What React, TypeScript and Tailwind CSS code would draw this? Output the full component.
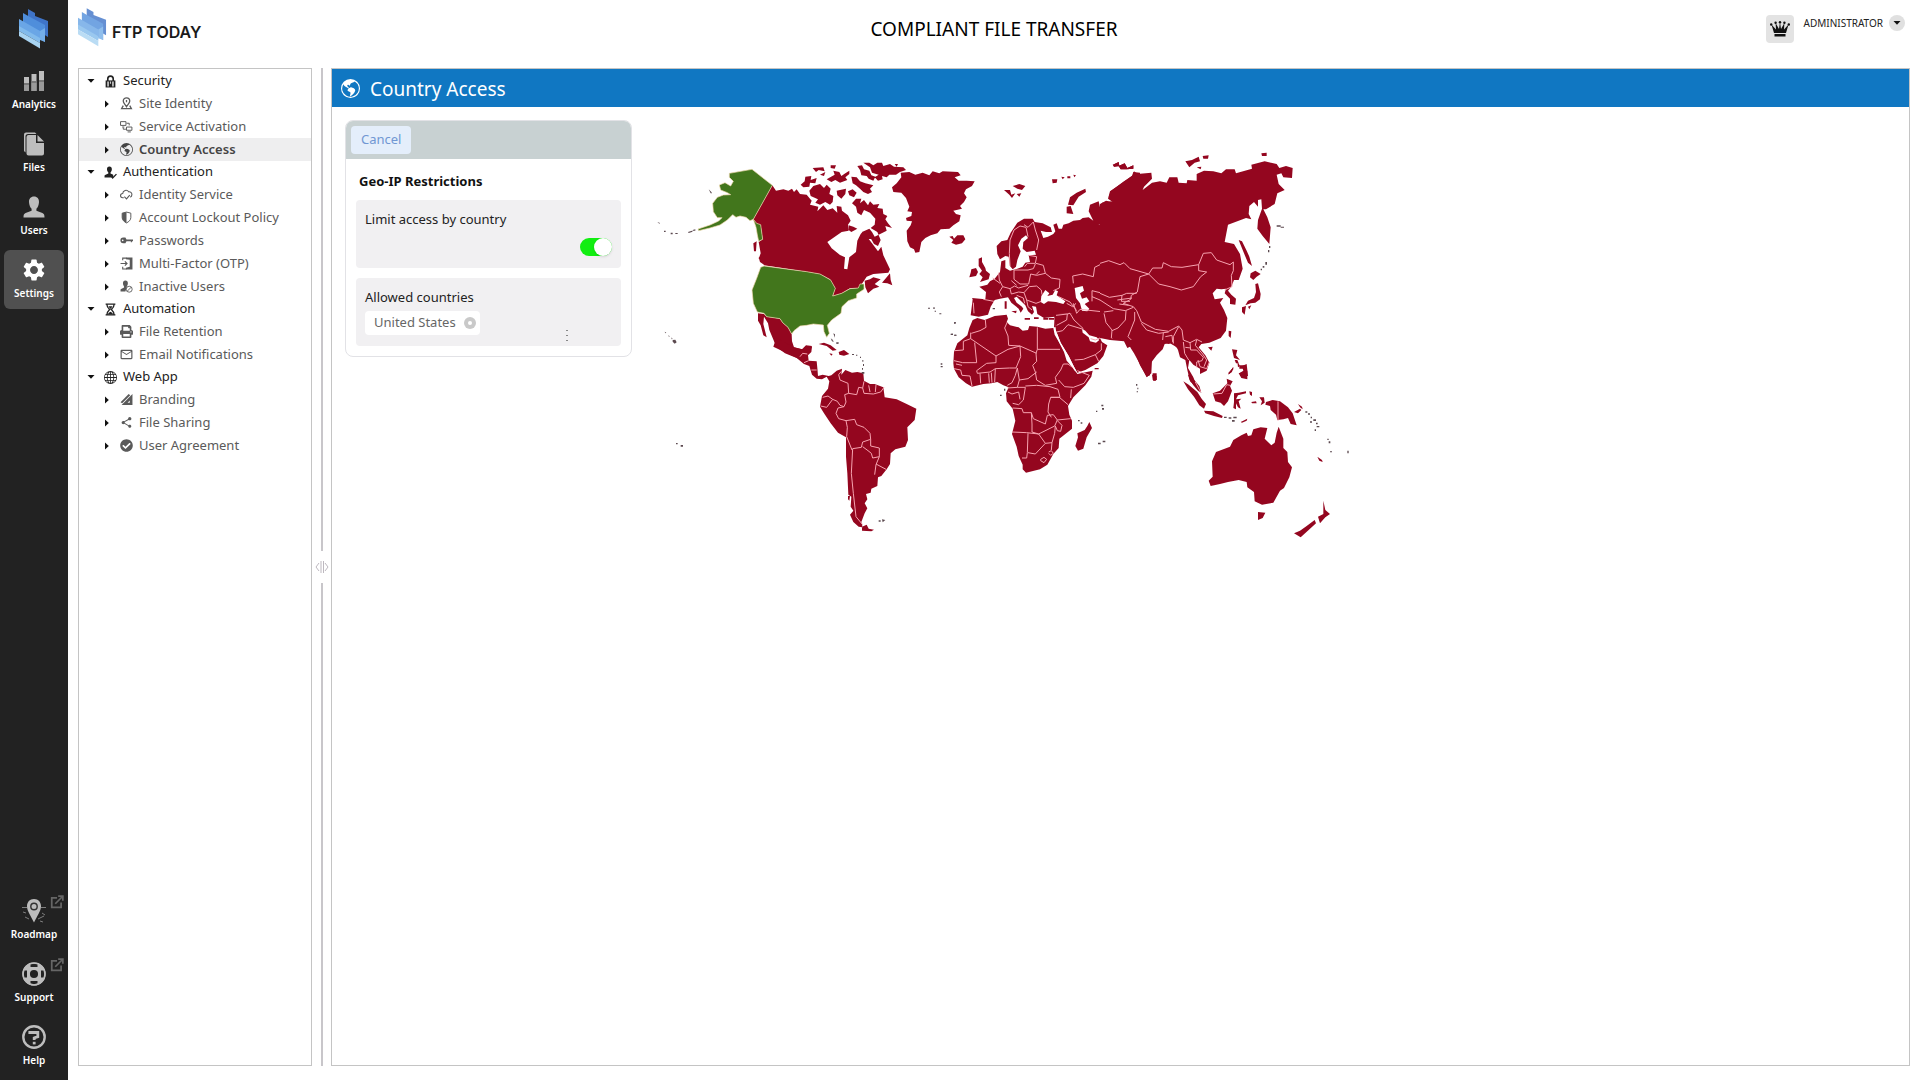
import { useState } from "react";
import type { ReactNode } from "react";
import { BsGlobe, BsGlobeAmericas } from "react-icons/bs";
import { FaCheckCircle, FaPrint } from "react-icons/fa";
import { MdOutlineEmail, MdSettings, MdShare } from "react-icons/md";

const svgIcon = (children: ReactNode) => (
  <svg viewBox="0 0 24 24" className="w-full h-full" fill="currentColor" aria-hidden="true">
    {children}
  </svg>
);

const icons: Record<string, ReactNode> = {
  analytics: svgIcon(
    <>
      <path d="M2 8h5v14H2zM9.500 5h5v17h-5zM17 2h5v20h-5z" />
      <path fill="#777" d="M2 14h5v2H2zM9.500 12h5v2h-5zM17 11h5v2h-5z" />
      <path fill="#999" d="M2 16h5v6H2zM9.500 14h5v8h-5zM17 13h5v9h-5z" />
    </>
  ),
  files: svgIcon(
    <>
      <path d="M2 2.500A2 2 0 0 1 4 .5h9l1.500 1.500H6A2.500 2.500 0 0 0 3.500 4.500v16L2 19z" />
      <path d="M6.500 3H14v8h8v10.500a2 2 0 0 1-2 2H6.500a2 2 0 0 1-2-2V5a2 2 0 0 1 2-2z" />
      <path d="M15.500 3 22 9.500h-6.500z" />
    </>
  ),
  users: svgIcon(
    <path d="M12 1.500c3.200 0 5.200 2.300 5 5.700-.2 3-1.300 5.300-2.600 6.600v2l6 2.200c1.700.7 2.100 2 2.100 4.500h-21c0-2.500.4-3.800 2.100-4.500l6-2.200v-2C8.300 12.500 7.200 10.200 7 7.200c-.2-3.400 1.800-5.700 5-5.700z" />
  ),
  roadmap: svgIcon(
    <>
      <path d="M0 8.500h5M19 8.500h5M1 13l3 1M20 14l3 2M3 18l4 2M16 20l6-3M18 22l3 1" stroke="currentColor" strokeWidth="1" opacity=".6" />
      <path d="M12 0C7.600 0 5 3.200 5 7.200 5 12 9 17 12 23.500 15 17 19 12 19 7.200 19 3.200 16.400 0 12 0z" />
      <circle cx="12" cy="7.500" r="3.200" fill="none" stroke="#333" strokeWidth="1.400" />
    </>
  ),
  support: svgIcon(
    <>
      <circle cx="12" cy="12" r="7.800" fill="none" stroke="currentColor" strokeWidth="7.500" />
      <path fill="#222" d="M8.500 1.800h7V5h-7zM8.500 19h7v3.200h-7zM1.800 8.500H5v7H1.800zM19 8.500h3.200v7H19z" />
      <circle cx="12" cy="12" r="11" fill="none" stroke="currentColor" strokeWidth="1.600" />
    </>
  ),
  help: svgIcon(
    <>
      <circle cx="12" cy="12" r="10.700" fill="none" stroke="currentColor" strokeWidth="2.400" />
      <path d="M7.800 9V7.500h8v4.200l-3.600 1.200v2" fill="none" stroke="currentColor" strokeWidth="2.800" />
      <path d="M10.800 16.800h2.800v2.600h-2.800z" />
    </>
  ),
  external: svgIcon(
    <path d="M12 5H3v16h16v-8M9 15 21 3M14 2h8v8" fill="none" stroke="currentColor" strokeWidth="3" />
  ),
  lock: svgIcon(
    <>
      <path d="M7 11V7a5 5 0 0 1 10 0v4" fill="none" stroke="currentColor" strokeWidth="3" />
      <path d="M3 10h18v13H3z" />
      <path fill="#ccc" d="M6 12h3v9H6zM11 12h2v4h-2zM15 12h3v9h-3z" />
    </>
  ),
  pin: svgIcon(
    <path d="M12 18C9 13 6 11 6 7.500a6 6 0 0 1 12 0C18 11 15 13 12 18zM12 5.500v4M6 16l-3 5.500h18L18 16" fill="none" stroke="currentColor" strokeWidth="2.400" />
  ),
  service: svgIcon(
    <path d="M1 3h10v7H1zM4 13h4M12 6h5v4M12 13h10v6H12zM14 22h6M6 14v3h5" fill="none" stroke="currentColor" strokeWidth="1.800" />
  ),
  auth: svgIcon(
    <>
      <path d="M10 1c3 0 4.500 2 4.500 5 0 2.500-1 4.500-2.500 6v2l5 2v5H1v-3c0-1 .5-1.500 2-2l5-2v-2C6.500 10.500 5.500 8.500 5.500 6c0-3 1.500-5 4.500-5z" />
      <path d="m13 18 3 4 7-7" fill="none" stroke="currentColor" strokeWidth="2.500" />
    </>
  ),
  identity: svgIcon(
    <path d="M7 18H5a4 4 0 0 1 0-8 6 6 0 0 1 11-3 5 5 0 0 1 6 5c0 2-1 4-3 5M8 16l4 4 6-7" fill="none" stroke="currentColor" strokeWidth="2" />
  ),
  shield: svgIcon(
    <>
      <path d="M12 2 4 4v8c0 5 4 8 8 10 4-2 8-5 8-10V4z" fill="none" stroke="currentColor" strokeWidth="1.800" />
      <path d="M12 2 4 4v8c0 5 4 8 8 10z" />
    </>
  ),
  key: svgIcon(
    <>
      <path d="M6 6.500h4l2 3.500h12v3.500h-2V15h-2v-1.500h-8L10 17H6a5 5 0 0 1 0-10.500z" />
      <circle cx="5" cy="11.800" r="1.500" fill="#fff" />
    </>
  ),
  otp: svgIcon(
    <>
      <path d="M11 1h12v22H11v-3l7-2V5l-7-1z" />
      <path d="M5 6V2h7M5 18v4h7M1 12h12M9 8l4 4-4 4" fill="none" stroke="currentColor" strokeWidth="2" />
    </>
  ),
  inactive: svgIcon(
    <>
      <path d="M10 1c3 0 4.500 2 4.500 5 0 2.500-1 4.500-2 6v2L10 21H1v-3c0-1 .5-1.500 2-2l4.500-2v-2C6.500 10.500 5.500 8.500 5.500 6c0-3 1.500-5 4.500-5z" />
      <circle cx="17" cy="17" r="5.500" fill="#fff" stroke="currentColor" strokeWidth="1.600" />
      <path d="m13 21 8-8" stroke="currentColor" strokeWidth="1.600" />
    </>
  ),
  hourglass: svgIcon(
    <>
      <path d="M3 2h18M3 22h18M5.500 3c0 5 3 7 5 9-2 2-5 4-5 9M18.500 3c0 5-3 7-5 9 2 2 5 4 5 9" fill="none" stroke="currentColor" strokeWidth="2.400" />
      <path d="M8 6h8l-4 5zM7 21c1-3 3-4 5-5 2 1 4 2 5 5z" />
    </>
  ),
  branding: svgIcon(
    <>
      <path d="M23 2v20H3zM18 14l-4 4h4z" fillRule="evenodd" />
      <path d="M1 17 16 2l3 2L4 19z" />
    </>
  ),
  settings: <MdSettings className="w-full h-full scale-110" />,
  country: <BsGlobeAmericas className="w-full h-full" />,
  web: <BsGlobe className="w-full h-full" />,
  print: <FaPrint className="w-full h-full" />,
  mail: <MdOutlineEmail className="w-full h-full scale-110" />,
  share: <MdShare className="w-full h-full" />,
  check: <FaCheckCircle className="w-full h-full" />,
};

const mainNav = [
  { label: "Analytics", icon: "analytics" },
  { label: "Files", icon: "files" },
  { label: "Users", icon: "users" },
  { label: "Settings", icon: "settings", active: true },
];

const helpNav = [
  { label: "Roadmap", icon: "roadmap", external: true },
  { label: "Support", icon: "support", external: true },
  { label: "Help", icon: "help" },
];

const tree = [
  {
    label: "Security",
    icon: "lock",
    items: [
      { label: "Site Identity", icon: "pin" },
      { label: "Service Activation", icon: "service" },
      { label: "Country Access", icon: "country", active: true },
    ],
  },
  {
    label: "Authentication",
    icon: "auth",
    items: [
      { label: "Identity Service", icon: "identity" },
      { label: "Account Lockout Policy", icon: "shield" },
      { label: "Passwords", icon: "key" },
      { label: "Multi-Factor (OTP)", icon: "otp" },
      { label: "Inactive Users", icon: "inactive" },
    ],
  },
  {
    label: "Automation",
    icon: "hourglass",
    items: [
      { label: "File Retention", icon: "print" },
      { label: "Email Notifications", icon: "mail" },
    ],
  },
  {
    label: "Web App",
    icon: "web",
    items: [
      { label: "Branding", icon: "branding" },
      { label: "File Sharing", icon: "share" },
      { label: "User Agreement", icon: "check" },
    ],
  },
];

function Logo({ className }: { className: string }) {
  return (
    <svg viewBox="0 0 30 40" className={className} aria-hidden="true">
      <path fill="#3f74c8" d="m9 0 7 4v3l13 5v16L9 16z" />
      <path fill="#4f8edb" d="m4 4 7 4 15 8v17L4 20z" />
      <path fill="#6aa6e6" d="m0 10 21 12v10L0 20z" />
      <path fill="#82bbec" d="m0 17 21 12v5L0 22z" />
      <path fill="#a9d4f2" d="m0 22 21 12v5.500L0 27z" />
      <path fill="#74aee8" d="m21 22 5-3v14l-5-2z" />
    </svg>
  );
}

type NavItem = { label: string; icon: string; active?: boolean; external?: boolean };

function NavButton({ item }: { item: NavItem }) {
  return (
    <a
      href="#"
      className={`relative flex flex-col items-center gap-[3px] h-[59px] mx-1 pt-2 rounded-md ${
        item.active ? "bg-[#505050] text-white" : "text-[#bdbdbd]"
      }`}
    >
      <span className="size-6">{icons[item.icon]}</span>
      <span className="text-[10px] leading-4 font-semibold text-white">{item.label}</span>
      {item.external && <span className="absolute right-0 top-1 size-[14px] text-[#666]">{icons.external}</span>}
    </a>
  );
}

function Caret({ down }: { down?: boolean }) {
  return (
    <svg viewBox="0 0 8 8" className="size-2 shrink-0" fill="#111" aria-hidden="true">
      <path d={down ? "M0.500 2h7L4 5.800z" : "M2 0.500v7L5.800 4z"} />
    </svg>
  );
}

function SettingsTree() {
  return (
    <nav className="w-[234px] shrink-0 pt-px border border-[#c4c4c4]">
      <ul>
        {tree.map((group) => (
          <li key={group.label}>
            <a href="#" className="flex items-center h-[22px] pl-2 text-[#222]">
              <Caret down />
              <span className="size-[13px] ml-[9px] mr-[6px]">{icons[group.icon]}</span>
              {group.label}
            </a>
            <ul>
              {group.items.map((item) => (
                <li key={item.label}>
                  <a
                    href="#"
                    className={`flex items-center h-[23px] pl-6 ${
                      "active" in item ? "bg-[#eeeeef] font-semibold text-[#444]" : "text-[#5a5a5a]"
                    }`}
                  >
                    <Caret />
                    <span className="size-[13px] ml-[9px] mr-[6px]">{icons[item.icon]}</span>
                    {item.label}
                  </a>
                </li>
              ))}
            </ul>
          </li>
        ))}
      </ul>
    </nav>
  );
}

// Land masses grouped by region, each group has its own origin on the map
const regions = [
  {
    name: "North America",
    transform: "translate(0 0)",
    allowed:
      "M268 100 336 88 397 136 340 238 330 242 318 232 300 228 288 232 278 224 262 240 240 255 210 264 176 272 174 267 210 255 236 243 246 233 232 233 220 215 218 190 232 172 250 165 272 164 262 158 242 150 238 135 255 128 272 138 280 124 268 112zM340 238 350 250 362 254 368 298 356 304 352 285 348 262zM372 378 500 395 540 402 572 420 586 445 578 468 605 460 630 446 655 444 660 432 672 432 672 448 650 462 650 474 625 482 606 500 603 520 575 540 562 556 568 580 560 592 552 575 550 555 520 552 500 556 480 558 462 572 455 582 444 562 428 548 420 536 380 530 372 520 352 516 340 490 336 450 350 415 362 382z",
    blocked:
      "M397 136 408 152 430 148 445 152 456 146 462 156 470 148 480 162 500 164 515 182 510 194 535 200 532 214 550 196 562 210 578 205 592 218 590 198 604 200 606 212 624 226 632 242 624 254 626 272 605 276 562 306 575 325 600 345 615 352 612 386 622 388 628 352 648 336 652 302 662 282 668 275 682 292 696 310 714 334 724 320 730 346 750 388 745 398 700 402 680 410 668 428 655 444 630 445 605 460 578 468 586 445 570 418 540 402 500 395 372 376 356 356 362 340 356 306 368 298 362 256 344 248 340 238zM674 422 690 418 700 412 722 418 704 432 718 440 700 446 684 460 676 442zM726 428 740 412 750 400 752 420 757 436 742 430zM340 310 350 304 348 334 342 334zM356 352 372 368 374 376 360 366zM636 190 648 200 652 218 664 226 672 210 690 218 706 236 704 254 692 264 712 276 722 300 714 318 702 312 694 298 672 290 666 276 688 266 696 276 704 290 740 272 736 258 756 264 744 250 736 238 742 228 730 222 728 206 712 204 718 192 700 194 690 184 684 196 672 180 660 190 664 176 648 176zM626 256 640 260 652 266 634 276 626 270zM508 152 520 138 540 132 552 144 560 134 572 146 568 162 580 168 578 186 570 194 556 186 540 194 526 188 534 178 512 168zM482 134 494 124 496 110 514 108 512 120 530 114 526 130 510 128 508 140 490 142zM518 84 550 82 554 94 536 90 528 96zM572 76 588 76 584 86 572 84zM540 104 556 96 552 108zM560 118 584 104 580 92 598 96 604 108 616 100 628 92 628 102 616 112 622 120 600 128 586 120 574 126zM590 152 600 150 618 146 616 162 604 176 592 166zM624 154 638 148 650 158 642 172 628 166zM634 110 650 112 660 124 676 130 700 136 690 146 696 156 684 162 670 156 660 146 648 136 638 130zM652 78 666 76 672 88 688 92 694 106 706 110 700 122 686 116 680 108 664 106 660 90zM670 68 688 68 700 76 712 68 726 68 730 78 750 72 762 80 790 82 798 90 780 96 768 104 748 104 740 112 726 108 728 118 714 122 704 112 716 104 696 98 690 82zM764 72 774 72 770 80zM354 520 372 522 380 530 420 536 428 548 444 562 455 582 456 604 462 622 486 628 498 616 516 618 510 634 496 642 480 650 484 660 400 620 404 608 388 570 384 550 372 530 370 552 380 592 370 586 362 556 354 542z",
    specks:
      "M206 148l8 8 2 4-4 0zM72 272h5v4h-5zM92 278h6v5h-6zM106 279h7v3h-7zM52 246l8 3-2 2zM144 276l12-4 2 3-12 4zM158 270l8-2v4h-8zM74 575l5 3-3 2zM86 586l4 4-5-1zM94 592l4 5-3 1zM98 600l8-1 4 8-6 4-6-6zM580 580l5 3-1 10zM572 595l8 6-4 2zM588 606l6 5-4 1z",
  },
  {
    name: "South America",
    transform: "translate(0 600)",
    blocked:
      "M402 -10 406 18 435 40 470 54 492 72 508 78 516 104 530 116 546 118 560 110 568 124 564 146 546 168 540 200 552 220 572 250 594 278 618 292 618 350 622 400 625 464 634 470 632 500 640 512 630 524 640 546 656 560 668 562 664 546 674 520 682 505 674 490 682 478 678 462 692 458 694 446 712 438 714 412 724 408 740 388 750 372 752 340 766 328 796 320 804 300 802 262 824 240 829 206 800 192 770 178 734 172 730 142 704 132 690 132 672 122 670 100 652 96 636 98 616 90 604 104 606 86 590 92 574 106 566 108 548 104 534 108 532 84 530 64 506 62 504 46 514 36 516 20 486 28 462 22zM666 560 680 554 686 566 702 569 694 574 666 572zM536 12 552 8 572 16 590 30 578 32 560 18zM568 40 578 42 574 47zM596 36 612 30 628 42 612 47 598 44zM624 468l6 0-2 14-4-4z",
    borders:
      "M604 94 596 104 600 120 624 130 626 160 614 164 618 186 612 200 594 204 588 220 596 236 618 242 622 262 620 290 636 330M626 160 650 164 656 142 668 144 672 124M668 144 672 160 700 162 722 156 732 142M686 136 690 156M708 134 706 156M548 172 564 168 578 178 560 202 542 198M578 178 592 184 600 196 612 200M618 242 644 238 650 254 672 262 690 280 692 298 668 306 664 322 638 326 634 400 640 460 648 530 668 554M668 320 684 332 694 340 698 354 718 350 718 324 692 318 692 298M718 350 708 374 704 404M708 372 738 388M480 50 488 40 502 42M492 68 506 62M514 90 530 90",
    specks:
      "M636 42h6v3h-6zM648 44h4v3h-4zM660 50h3v4h-3zM667 60h3v5h-3zM669 72h3v6h-3zM666 84h3v5h-3zM665 96h8v5h-8zM108 309h5v4h-5zM122 315h7v5h-7zM716 541h6v4h-6zM726 538l10 2-8 7zM574 0l8 4-4 1zM590 7h6v4h-6z",
  },
  {
    name: "Europe",
    transform: "translate(780 0)",
    blocked:
      "M-24 142 -10 130 4 112 2 98 28 96 46 104 68 98 88 106 98 94 118 100 128 94 174 96 182 106 164 112 176 122 200 122 224 124 216 138 198 148 192 160 200 172 192 186 180 198 186 206 160 212 168 222 182 226 178 244 160 256 148 266 122 268 112 280 92 286 76 294 64 306 58 336 46 338 42 328 30 322 22 304 20 272 32 256 36 244 20 242 18 234 34 228 36 216 22 214 28 200 18 174 4 158 -20 156z" +
      "M148 290 158 288 162 296 172 286 190 286 196 298 186 310 168 314 154 308 160 300zM312 150 330 150 334 164 346 160 336 174 328 164zM338 138 358 132 376 138 366 150 352 146zM350 162 364 160 358 170z" +
      "M456 118h16l-2 10-12 2zM484 110l10 2-6 6zM502 109h9v6h-9zM520 104l8 2-5 6zM500 200 512 198 520 222 500 220zM504 194 510 172 530 158 556 146 558 156 536 170 520 196zM640 74 656 66 658 78 642 80zM656 78 674 70 682 84 700 76 700 86 680 88 662 88z" +
      "M236 356 246 352 246 366 256 384 258 392 270 402 266 418 240 426 248 412 238 402 246 392 236 378zM214 388 228 384 234 396 228 408 208 412 212 398z" +
      "M290 318 304 304 322 300 332 278 352 248 372 236 398 236 404 246 428 250 452 262 456 276 438 276 422 272 430 294 444 290 460 282 466 274 460 254 470 250 476 266 486 266 490 254 506 250 520 242 540 240 548 234 566 232 580 242 566 214 570 194 596 184 600 202 606 250 594 256 612 250 608 226 600 204 606 188 640 184 626 172 632 154 650 140 672 124 696 108 700 96 720 98V560H480L462 562 464 530 432 534 412 522 408 500 396 498 402 516 396 524 384 514 376 496 350 470 342 474 350 488 366 500 370 506 362 518 356 506 334 488 324 472 300 476 284 480 272 500 264 524 236 530 212 526 218 478 216 474 256 478 258 456 238 440 262 434 270 424 284 416 300 396 304 364 316 360 316 384 330 392 352 386 368 380 376 368 390 366 386 346 408 344 404 332 380 336 368 326 370 306 384 294 378 286 364 296 354 316 362 334 352 360 348 380 338 388 330 378 326 350 316 348 300 358 292 342z" +
      "M314 484h6v22h-6zM334 514 350 512 348 520zM374 534h16v5h-16zM430 534h14v5h-14z",
    water:
      "M422 486 424 468 436 450 448 460 442 468 458 464 466 450 474 454 470 466 496 484 490 492 468 486 444 484 432 492zM524 444 548 438 552 452 540 460 546 476 560 472 568 484 554 492 568 506 562 514 546 512 540 490 528 474z",
    borders:
      "M330 378 328 340 330 300 342 270 360 258 378 262 384 290M372 254 384 262 400 246 406 270 416 300 410 330M386 346 410 350 406 370 382 370 374 380M408 370 430 376 436 400 410 406 392 402M406 372 400 386 384 390 342 390 342 418 360 432 386 432 392 402M436 400 454 414 480 418 478 444 460 452M296 398 298 420 308 440 298 456 304 470M308 440 330 446 344 438 356 444 384 436M330 446 334 462 356 456 372 458 388 440 410 438 424 450 426 464M334 422 350 436M372 458 380 480 408 490 424 484M350 466 370 474 374 490M380 480 384 500 396 510M278 414 300 430M220 488 222 520M250 478 282 484M408 404 418 394M476 470 510 486 530 512M500 490 518 500 528 490M468 524 510 520 530 528 544 566M470 524 468 560M510 520 500 540 470 560M520 430 518 408 548 402 580 410 584 382 620 364 646 372 664 368 688 392 720 394M576 484 576 452 608 460 640 480 660 474 680 460 712 462 720 440M576 470 600 480 620 508 640 510 670 490 720 488M612 514 610 540 636 572 640 596M610 514 652 516 670 500 684 506 676 540 656 568M650 484 690 478M660 492 700 494",
    specks: "M84 503h6v3h-6zM100 502h4v5h-4zM104 512h4v3h-4zM118 520h6v3h-6zM162 547h5v4h-5zM152 581h7v4h-7zM164 584h6v3h-6zM278 504h7v4h-7z",
  },
  {
    name: "Africa and Middle East",
    transform: "translate(900 480)",
    blocked:
      "M98 60 112 54 134 60 164 48 200 44 204 56 200 66 210 76 236 82 248 92 264 90 268 78 292 80 316 86 340 84 344 104 358 128 372 156 380 182 402 206 412 222 458 212 454 230 436 256 400 292 384 318 388 344 396 362 396 386 358 416 356 444 340 462 322 494 300 508 258 518 248 508 248 494 236 468 230 440 216 402 226 362 218 326 200 304 198 280 206 262 190 256 172 246 154 250 130 252 96 260 78 250 56 232 42 206 40 190 42 156 52 130 82 106 88 84z" +
      "M342 40 348 92 362 128 386 168 402 200 412 218 436 210 472 190 490 168 502 136 486 126 480 114 510 120 552 124 562 144 580 136 586 160 600 196 620 230 630 226 632 190 650 166 668 148 674 132 690 130 704 138 720 150V40z" +
      "M448 366 456 384 440 412 430 446 414 452 406 438 414 412 412 400 434 390 442 378zM640 222 650 228 650 240 640 242zM464 204h12v4h-12zM282 52h14v5h-14zM326 54h16v5h-16z",
    water: "M342 92 348 92 362 128 386 168 402 200 412 218 404 212 384 184 374 156 358 128zM426 86 436 92 448 106 470 112 478 120 468 128 450 124 446 112 428 98z",
    borders:
      "M136 60 138 82 120 92 94 100M92 98 92 116 168 168 204 148 240 138M92 116 70 124 70 150 44 152M104 128 110 188 68 188 42 182M202 66 194 84 204 108 206 136 240 138 290 160M292 82 292 148 360 148M292 148 288 160 290 184 278 196 286 216 290 240 316 256M240 138 242 170 228 204 208 204 166 206 150 216 112 220 110 212 140 190 168 188 168 168M42 206 62 210 66 226 90 228 96 258M48 192 66 196M120 220 122 250M146 220 148 248M154 218 156 248M166 206 164 246M232 204 226 226 216 248 202 256M232 204 238 240 264 236 290 216M238 240 232 262 202 264M232 262 256 262 250 300 236 314 218 310M204 276 216 282 236 276 240 298M256 258 290 256 330 260 354 268M316 256 350 250 346 232 362 210 370 192 384 192 400 204M356 240 374 260 400 262 432 250 448 226 412 212M394 268 392 294M354 268 360 292 332 292 326 312 324 336 334 352M332 292 358 292 384 314M218 324 246 326 250 338 274 338 280 356 316 372 322 346 340 344 352 360 392 356M274 338 276 372 276 396 296 402 344 378 352 360M216 396 260 398 296 402M352 362 366 376 362 394 352 392 346 378 344 400 336 428 316 430 296 402M264 400 262 458 260 474 246 474M264 458 286 462 316 430M336 428 334 450M302 478 312 472 320 478 312 488 302 482zM326 456 334 452 340 460 332 466 326 460M348 46 382 42 390 40 402 60 430 86M382 42 380 60 350 76M350 96 368 92 384 74 430 88M404 180 430 178 466 164 476 184M466 164 484 150 484 130M452 116 466 120 480 114M400 10 410 40 420 28 494 36 498 90 520 92 516 116M494 36 540 34 556 18M556 20 560 60 540 90 520 92M566 16 582 26 584 52 564 96 568 124M584 30 602 40 606 72 640 88 680 94 706 92 720 78M606 72 616 80M666 94 670 120 694 118M694 96 700 130",
    specks: "M42 67h6v3h-6zM34 101h5v3h-5zM42 104h6v3h-6zM2 190h5v4h-5zM2 198h6v4h-6zM588 252h4v5h-4zM592 263h3v5h-3zM590 274h4v3h-4zM484 314h6v5h-6zM486 324h6v5h-6zM468 332h4v4h-4zM414 360h5v4h-5zM422 367h5v4h-5zM474 428h8v5h-8zM488 422h8v5h-8zM180 284h5v4h-5zM192 266h4v6h-4z",
  },
  {
    name: "Asia",
    transform: "translate(1380 0)",
    blocked:
      "M0 192 18 182 38 186 24 176 30 154 50 140 76 122 98 106 102 94 112 102 154 98 156 116 132 140 128 150 156 128 180 124 200 128 208 112 232 112 236 128 260 130 262 120 290 122 290 102 312 92 340 94 364 100 378 88 404 88 408 100 456 86 454 74 494 64 530 72 538 84 558 78 578 84 576 114 550 112 544 100 530 104 536 132 554 150 532 160 524 192 498 208 490 208 502 232 512 262 508 312 488 288 472 266 474 240 486 206 484 178 474 180 474 200 462 186 448 198 446 222 454 238 438 234 384 254 374 306 402 312 420 342 428 386 416 420 402 420 394 440 384 452 394 464 408 476 406 494 390 492 390 476 374 460 378 446 364 448 350 446 338 460 344 478 370 474 360 488 372 510 382 534 378 572 362 594 328 608 304 612 296 622 316 646 328 668 320 692 300 702 300 686 280 674 268 660 264 684 280 712 288 740 270 724 262 690 256 660 240 652 234 630 222 606 206 612 190 606 180 628 156 660 154 700 140 712 124 680 102 640 92 624 80 600 0 590z" +
      "M38 74 56 66 58 78 42 80zM56 78 74 70 82 84 100 76 100 86 80 88 62 88zM256 64 276 60 296 50 300 64 284 68 268 82zM308 48 326 46 324 56 310 56zM290 82 304 80 302 88zM484 40 500 38 500 48 486 48zM416 300 426 304 440 332 448 350 456 378 444 368 432 340zM452 400 466 392 482 402 470 410 460 420 450 412zM466 432 474 430 482 462 480 478 466 488 452 490 436 496 444 482 462 474 468 456zM426 502 438 498 434 524 426 516zM444 500 454 496 448 508zM386 572 394 574 392 594 386 588zM324 622 338 620 334 632zM396 628 412 630 408 646 420 660 402 654zM426 678 440 672 444 708 428 708 418 700 430 692zM400 680 384 704 396 696zM412 664 420 678 414 682zM158 700h12v20h-12z",
    borders:
      "M0 370 26 362 60 374 72 368 90 386 146 402 158 384 186 384 190 368 214 380 246 382 296 374 310 340 334 338 350 360 390 374 400 366 400 392 394 406 396 440 374 450M146 402 176 432 210 440 244 450 280 440 302 410 320 396 296 392 296 374M146 402 120 410 112 456 94 466 92 478 70 490 100 500 110 512 124 546 166 568 206 574 236 558 246 570 250 600 270 608 290 598 306 606M0 460 28 472 66 466 80 460 110 460M0 480 40 506 76 512 100 502M52 480 96 474M58 492 86 496M66 466 64 484 90 484M12 516 40 512M12 520 18 548 36 570 34 594M78 512 76 540 54 564 36 572M104 516 104 540 84 590 94 600M124 550 140 570 176 580 206 576M190 578 188 600M196 590 216 586 218 606M236 560 220 590 220 610M250 606 254 640 266 660M270 608 272 630 290 630 310 652 306 662 290 666 290 682M290 600 286 616 308 642 320 660 312 680M256 622 272 624",
    specks: "M530 256h12v4h-12zM542 260h10v3h-10zM507 318h4v6h-4zM504 330h4v7h-4zM496 366h5v8h-5zM488 378h5v5h-5zM482 386h4v5h-4z",
  },
  {
    name: "Oceania",
    transform: "translate(1500 660)",
    blocked:
      "M206 362 218 350 216 304 228 276 270 260 280 240 304 226 320 218 324 228 334 226 340 208 362 202 382 204 374 236 394 256 404 248 410 218 416 200 430 236 430 264 442 276 444 306 456 322 448 352 432 384 420 392 400 428 366 434 344 424 342 396 322 382 320 366 296 360 264 366 240 372 212 378zM354 456 376 458 368 474 354 480zM550 422 556 450 570 462 556 472 540 490 534 470 550 462zM524 480 528 490 506 510 482 532 462 520 480 512 500 498z" +
      "M130 64 146 74 172 96 186 118 198 132 192 146 178 136 162 110 144 88zM144 44 154 46 166 64 178 78 184 98 174 92 160 76 148 58zM192 152 220 154 248 168 246 174 222 168 196 160zM218 100 240 92 262 70 260 56 278 64 270 78 276 92 264 124 252 138 242 128 226 124zM282 100 296 98 318 94 318 100 294 106 288 118 304 116 296 124 302 146 294 142 288 130 288 148 280 144 282 126zM328 94 336 96 336 108 330 104zM334 126 348 124 350 130 336 130zM358 112 372 112 374 128 362 136 366 124zM378 126 398 120 420 124 444 142 458 160 470 196 452 192 444 174 430 178 412 180 408 164 392 150 390 138 376 134zM462 156 480 146 484 150 474 160zM474 132 486 140 488 148 480 142zM264 40 280 22 280 28 268 42zM284 0 292 0 296 10 288 10zM296 40 322 32 322 58 304 54zM298 16h16v10h-16zM302 186 322 176 320 182 306 188zM532 290 546 300 548 306 538 302zM36 44 46 44 48 62 40 62z",
    borders: "M414 124 414 182M220 102 246 100 260 74 270 76M166 66 182 96M174 0 180 20 200 26 208 6",
    specks: "M252 170h8v4h-8zM266 172h8v4h-8zM280 170h10v5h-10zM276 180h8v5h-8zM496 154h6v4h-6zM504 160h6v4h-6zM512 170h4v5h-4zM520 178h8v5h-8zM510 184h6v4h-6zM528 188h5v5h-5zM530 198h8v4h-8zM524 208h4v5h-4zM562 236h4v4h-4zM566 244h5v6h-5zM570 274h6v3h-6zM622 272h4v8h-4z",
  },
];

function WorldMap() {
  return (
    <svg viewBox="0 0 2160 1260" className="w-[720px] h-[420px]" role="img" aria-label="World map of allowed countries">
      {regions.map((r) => (
        <g key={r.name} transform={r.transform} strokeLinejoin="round">
          <path d={r.blocked} fill="#94061f" />
          {"water" in r && <path d={r.water} fill="#fff" />}
          {"borders" in r && <path d={r.borders} fill="none" stroke="#f7a3b0" strokeWidth="3" />}
          {"allowed" in r && <path d={r.allowed} fill="#42761c" stroke="#f3d9b0" strokeWidth="2" />}
          <path d={r.specks} fill="#5c4a50" />
        </g>
      ))}
    </svg>
  );
}

function RestrictionCard() {
  const [limited, setLimited] = useState(true);

  return (
    <section className="w-[287px] shrink-0 rounded-lg border border-[#e2e2e6] overflow-hidden">
      <div className="flex items-center h-[38px] px-[5px] bg-[#c8d1d2]">
        <button className="h-7 px-[10px] rounded bg-[#e4eefb] text-[#7097d3]">Cancel</button>
      </div>
      <div className="px-[10px] pt-2 pb-[10px]">
        <h2 className="mb-[5px] pl-[3px] leading-7 font-bold text-[#111]">Geo-IP Restrictions</h2>
        <label className="flex flex-col justify-between h-[68px] mb-[10px] px-[9px] pt-[9px] pb-3 rounded bg-[#f1f0f2] text-[#222]">
          <span className="leading-5">Limit access by country</span>
          <input
            type="checkbox"
            checked={limited}
            onChange={(e) => setLimited(e.target.checked)}
            className="sr-only"
          />
          <span
            className={`flex self-end items-center w-8 h-[18px] rounded-full ${
              limited ? "justify-end bg-[#12ee12]" : "justify-start bg-[#c9c9c9]"
            }`}
          >
            <span className="size-[18px] rounded-full bg-white shadow-sm" />
          </span>
        </label>
        <div className="relative h-[68px] px-[9px] pt-[9px] rounded bg-[#f1f0f2] text-[#222]">
          <p className="mb-1 leading-5">Allowed countries</p>
          <span className="inline-flex items-center gap-2 h-6 pl-[9px] pr-1 rounded bg-white text-[#666]">
            United States
            <button aria-label="Remove United States" className="flex items-center justify-center size-3 rounded-full bg-[#c9c9c9]">
              <span className="size-1 rounded-full bg-white" />
            </button>
          </span>
          <svg viewBox="0 0 4 12" className="absolute right-[52px] bottom-1 w-1 h-3" fill="#888" aria-hidden="true">
            <path d="M1 0h2v1H1zM1 5h2v1H1zM1 10h2v1H1z" />
          </svg>
        </div>
      </div>
    </section>
  );
}

export default function App() {
  return (
    <div className="flex h-screen bg-white font-['Noto_Sans',sans-serif] text-[13px]">
      <aside className="flex flex-col w-[68px] shrink-0 pt-[9px] bg-[#222]">
        <Logo className="w-[30px] h-10 mx-auto mb-3" />
        <nav className="flex flex-col gap-1">
          {mainNav.map((item) => (
            <NavButton key={item.label} item={item} />
          ))}
        </nav>
        <nav className="flex flex-col gap-1 mt-auto pb-1">
          {helpNav.map((item) => (
            <NavButton key={item.label} item={item} />
          ))}
        </nav>
      </aside>

      <div className="flex flex-col flex-1 min-w-0 pb-[14px]">
        <header className="grid grid-cols-3 h-[68px] shrink-0 px-[10px]">
          <div className="flex items-start pt-2">
            <Logo className="w-[29px] h-[39px] opacity-80" />
            <span className="ml-[5px] mt-[14px] leading-5 font-['Inter',sans-serif] text-[16px] font-semibold text-[#1a1a1a]">
              FTP TODAY
            </span>
          </div>
          <h1 className="pt-[15px] leading-7 text-center text-[19px] text-black">COMPLIANT FILE TRANSFER</h1>
          <div className="flex items-start justify-end pt-[15px] pr-[5px]">
            <button aria-label="Plan" className="flex items-center justify-center size-7 mr-[10px] rounded bg-[#e3e3e3]">
              <svg viewBox="0 0 20 16" className="w-5 h-4" fill="#111" aria-hidden="true">
                <path d="m1.500 3.500 4.500 5-.4-6.500L9 8l1-7 1 7 3.400-6-.4 6.500 4.500-5L16 12H4zM4.500 13h11v2.500h-11z" />
                <circle cx="1.200" cy="3.500" r="1.200" />
                <circle cx="5.600" cy="1.800" r="1.200" />
                <circle cx="10" cy="1.200" r="1.200" />
                <circle cx="14.400" cy="1.800" r="1.200" />
                <circle cx="18.800" cy="3.500" r="1.200" />
              </svg>
            </button>
            <span className="text-[10px] leading-4 text-[#222]">ADMINISTRATOR</span>
            <button aria-label="Account menu" className="flex items-center justify-center size-4 ml-[6px] rounded-full bg-[#e0e0e0]">
              <Caret down />
            </button>
          </div>
        </header>

        <div className="flex flex-1 min-h-0 px-[10px]">
          <SettingsTree />
          <div className="flex flex-col items-center w-[19px] shrink-0">
            <div className="w-[2px] flex-1 bg-[#c8c6ca]" />
            <svg viewBox="0 0 14 16" className="w-[14px] h-8" fill="none" stroke="#bdb8bf" aria-hidden="true">
              <path d="M4 4 1 8l3 4M10 4l3 4-3 4M6 2v12M8.500 2v12" />
            </svg>
            <div className="w-[2px] flex-1 bg-[#c8c6ca]" />
          </div>
          <main className="flex flex-col flex-1 min-w-0 border border-[#c4c4c4]">
            <div className="flex items-center gap-[10px] h-[38px] shrink-0 pl-[9px] bg-[#1077c2] text-white">
              <span className="size-[19px]">{icons.country}</span>
              <h2 className="pt-[2px] text-[19px] leading-7">Country Access</h2>
            </div>
            <div className="flex items-start gap-2 pl-[13px] pt-[13px]">
              <RestrictionCard />
              <div className="pt-5">
                <WorldMap />
              </div>
            </div>
          </main>
        </div>
      </div>
    </div>
  );
}
